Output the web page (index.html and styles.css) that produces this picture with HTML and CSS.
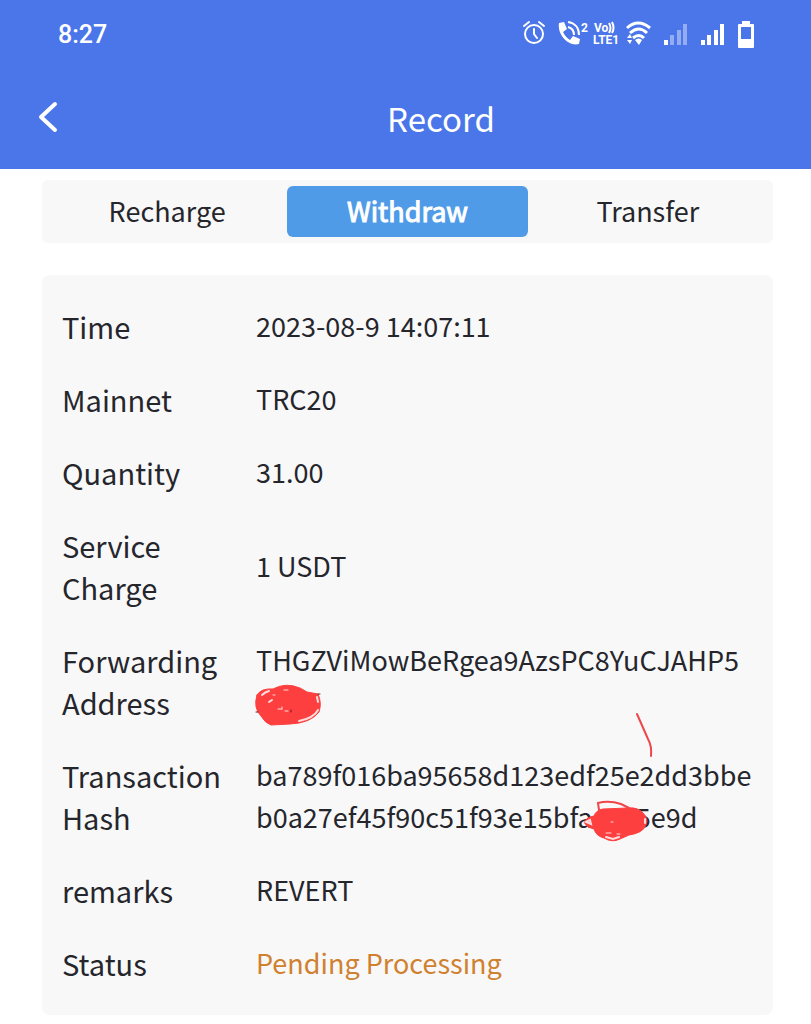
FILE: index.html
```html
<!DOCTYPE html>
<html lang="en">

<head>
    <meta charset="utf-8">
    <meta name="viewport" content="width=device-width, initial-scale=1">
    <title>Record</title>
    <link rel="stylesheet" href="styles.css">
</head>

<body>
    <header class="header">
        <div class="status-bar">
            <span class="clock">8:27</span>
            <svg class="status-icons" viewBox="0 0 232 32" width="232" height="32" role="img" aria-label="Phone status">
                <!-- alarm -->
                <g fill="none" stroke="#fff" stroke-width="2" stroke-linecap="round">
                    <circle cx="11" cy="16" r="9"/>
                    <path d="M11 11v5l3 4M1 8l5-4M16 4l5 4"/>
                </g>
                <!-- call -->
                <path fill="#fff" d="M36 5l5-1 3 7-4 3c2 4 4 6 7 8l3-4 7 3-1 5c-10 3-22-9-20-21z"/>
                <path fill="none" stroke="#fff" stroke-width="2" d="M45 4c7 1 11 6 11 13M45 9c4 1 6 4 6 8"/>
                <text class="icon-sup" x="58" y="14">2</text>
                <text class="icon-vo" x="71" y="14">Vo</text>
                <path fill="none" stroke="#fff" stroke-width="2" d="M86 5q3 5 0 10M89 4q3 6 0 11"/>
                <text class="icon-lte" x="70" y="26">LTE1</text>
                <!-- wifi -->
                <g fill="none" stroke="#fff" stroke-width="3">
                    <path d="M104 10q11-10 23 0M107 15q9-8 17 0M110 20q6-5 11 0"/>
                </g>
                <path fill="#fff" d="M112 22q4-3 7 0l-3 5zM104 20l3-4 2 4zM104 22h5l-2 4z"/>
                <!-- signal -->
                <path fill="#fff" d="M141 22h4v5h-4zM178 22h4v5h-4zM184 17h4v10h-4zM191 12h4v15h-4zM197 6h4v21h-4z"/>
                <path fill="#fff" opacity=".4" d="M147 17h4v10h-4zM154 12h4v15h-4zM160 6h4v21h-4z"/>
                <!-- battery -->
                <path fill="#fff" fill-rule="evenodd" d="M219 3h8v3h3q1 0 1 1v22q0 1-1 1h-14q-1 0-1-1v-22q0-1 1-1h3zM218 9v12h10v-12z"/>
            </svg>
        </div>
        <div class="nav-bar">
            <button class="back" type="button" aria-label="Back">
                <svg viewBox="0 0 20 32" width="20" height="32"><path d="M17 3L3 16l14 13"/></svg>
            </button>
            <h1 class="title">Record</h1>
        </div>
    </header>

    <main class="content">
        <nav class="tabs">
            <button class="tab" type="button">Recharge</button>
            <button class="tab active" type="button">Withdraw</button>
            <button class="tab" type="button">Transfer</button>
        </nav>

        <dl class="card">
            <div class="row">
                <dt>Time</dt>
                <dd>2023-08-9 14:07:11</dd>
            </div>
            <div class="row">
                <dt>Mainnet</dt>
                <dd>TRC20</dd>
            </div>
            <div class="row">
                <dt>Quantity</dt>
                <dd>31.00</dd>
            </div>
            <div class="row">
                <dt>Service Charge</dt>
                <dd>1 USDT</dd>
            </div>
            <div class="row">
                <dt>Forwarding Address</dt>
                <dd>THGZViMowBeRgea9AzsPC8YuCJAHP5<br><span class="hidden-text">
                    <svg class="scribble scribble-address" viewBox="0 0 70 44" width="70" height="44">
                        <path class="ink" d="M4 12Q8 5 20 6Q33 -1 47 5L54 9L65 11Q69 20 66 29Q58 40 37 41L18 42Q12 40 8 33Q0 25 4 12z"/>
                        <path class="gap" d="M9 12q3-3 7-4M46 38q15-3 19-11M16 19l3-2M64 14l1 5"/>
                        <path class="speck" d="M25 26h4M32 28h3M31 7h4M20 12h2M29 24v2"/>
                        <path class="dot" d="M3 29h2M65 11h2M38 27v2"/>
                    </svg></span></dd>
            </div>
            <div class="row">
                <dt>Transaction Hash</dt>
                <dd>ba789f016ba95658d123edf25e2dd3bbe<br>b0a27ef45f90c51f93e15bfa<span class="hidden-text">
                    <svg class="scribble scribble-hash" viewBox="0 0 70 44" width="70" height="44">
                        <path class="ink" d="M13 17Q6 18 3 23Q5 28 13 30Q15 37 23 39Q31 44 39 40L48 36Q62 34 65 26Q68 20 62 14Q57 8 47 9L22 10Q15 11 13 17z"/>
                        <path class="stroke" d="M18 11L17 4Q28 1 40 5L48 9"/>
                        <path class="gap" d="M5 23l4-2 1 4zM25 38l7 2 6-2M64 20v4"/>
                        <path class="speck" d="M30 23h2M25 34h5M36 35h3"/>
                    </svg>
                    <svg class="scribble scribble-tick" viewBox="0 0 20 46" width="20" height="46">
                        <path class="stroke" d="M2 2l11 25q4 7 3 17"/>
                    </svg></span>5e9d</dd>
            </div>
            <div class="row">
                <dt>remarks</dt>
                <dd>REVERT</dd>
            </div>
            <div class="row">
                <dt>Status</dt>
                <dd class="pending">Pending Processing</dd>
            </div>
        </dl>
    </main>
</body>

</html>
```
FILE: styles.css
```css
* {
    box-sizing: border-box;
}

body {
    margin: 0;
    background: #fff;
    color: #25262c;
    font-family: "Noto Sans CJK SC", "Noto Sans", sans-serif;
}

button {
    border: 0;
    background: none;
    font-family: inherit;
    color: inherit;
    cursor: pointer;
}

.header {
    background: #4b76e9;
    color: #fff;
}

.status-bar {
    display: flex;
    justify-content: space-between;
    align-items: center;
    height: 68px;
    padding: 0 56px 0 58px;
}

.clock {
    font: 500 25px Roboto, sans-serif;
}

.icon-sup, .icon-vo, .icon-lte {
    fill: #fff;
    font: bold 12px Roboto, sans-serif;
}

.nav-bar {
    display: flex;
    align-items: center;
    height: 101px;
    padding-bottom: 2px;
}

.back {
    width: 71px;
    height: 64px;
    padding: 0 0 2px 38px;
    text-align: left;
}

.back svg {
    display: block;
    fill: none;
    stroke: #fff;
    stroke-width: 4;
    stroke-linecap: round;
    stroke-linejoin: round;
}

.title {
    flex: 1;
    margin: 0;
    font-size: 33px;
    font-weight: 400;
    line-height: 48px;
    text-align: center;
}

.content {
    padding: 11px 38px 9px 42px;
}

.tabs {
    display: grid;
    grid-template-columns: repeat(3, 1fr);
    padding: 6px 5px;
    border-radius: 6px;
    background: #f8f8f8;
}

.tab {
    height: 51px;
    padding: 0 0 2px;
    border-radius: 6px;
    font-size: 27px;
}

.tab.active {
    background: #509be8;
    color: #fff;
    -webkit-text-stroke: 1px #fff;
}

.card {
    display: flex;
    flex-direction: column;
    gap: 31px;
    margin: 32px 0 0;
    padding: 30px 20px 31px;
    border-radius: 8px;
    background: #f8f8f9;
}

.row {
    display: grid;
    grid-template-columns: 162px 1fr;
    column-gap: 32px;
    align-items: center;
    line-height: 42px;
}

dt {
    font-size: 29px;
}

dd {
    margin: 0;
    font-size: 27px;
    white-space: nowrap;
}

.pending {
    color: #d0812f;
}

/* hand-drawn marks over the private characters */
.hidden-text {
    display: inline-block;
    position: relative;
    width: 43px;
    height: 27px;
    vertical-align: baseline;
}

.scribble {
    position: absolute;
    fill: none;
    stroke-linecap: round;
}

.scribble-address {
    left: -3px;
    top: -3px;
}

.scribble-hash {
    left: -12px;
    top: -2px;
}

.scribble-tick {
    left: 42px;
    top: -89px;
}

.ink {
    fill: #fd3f3f;
    stroke: #fd3f3f;
    stroke-width: 1;
}

.stroke {
    stroke: #ee4649;
    stroke-width: 2;
}

.gap, .speck {
    stroke: #ffdcdc;
    stroke-width: 2;
}

.speck {
    stroke-width: 1;
}

.dot {
    stroke: #5c2020;
    stroke-width: 1;
}
```
